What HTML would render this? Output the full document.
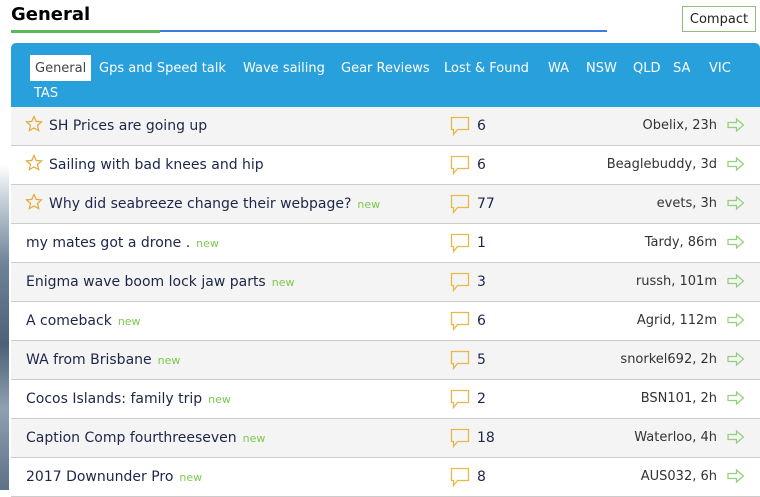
<!DOCTYPE html>
<html><head><meta charset="utf-8"><style>
*{margin:0;padding:0;box-sizing:border-box}
body{width:760px;height:490px;overflow:hidden;background:#fff;font-family:"DejaVu Sans","Liberation Sans",sans-serif;position:relative}
.bgimg{position:absolute;left:0;top:165px;width:9px;height:325px;background:linear-gradient(180deg,#fff 0%,#c9d3dd 10%,#6f8499 30%,#4c6178 55%,#8ea0b2 75%,#5d7187 100%)}
h1{position:absolute;left:11px;top:4px;font-size:18px;font-weight:bold;color:#000}
.ln1{position:absolute;left:11px;top:30px;width:149px;height:3px;background:#5cb85c}
.ln2{position:absolute;left:160px;top:30px;width:447px;height:2px;background:#3b7dd8}
.compact{position:absolute;left:682px;top:6px;width:74px;height:26px;border:1px solid #8bbf7a;font-size:13px;color:#222;text-align:center;line-height:25px}
.hdr{position:absolute;left:11px;top:43px;width:749px;height:64px;background:#27a0dc;border-radius:5px 5px 0 0}
.tab{position:absolute;top:12px;font-size:13px;color:#fff;height:26px;line-height:27px;white-space:nowrap}
.tab.act{background:#fff;color:#444;padding:0 5px}
.row{position:absolute;left:11px;width:749px;height:39px;border-bottom:1px solid #ccc;color:#1d2648;font-size:14px}
.row.o{background:#f4f4f4}
.t{position:absolute;top:11px;left:15px;white-space:nowrap}
.s .t{left:38px}
.new{color:#7dc84e;font-size:11px;margin-left:6px}
.star{position:absolute;left:14px;top:8px}
.cm{position:absolute;left:439px;top:9px}
.n{position:absolute;left:466px;top:11px}
.u{position:absolute;right:43px;top:11px;font-size:13px;color:#333;white-space:nowrap}
.ar{position:absolute;right:15px;top:11px}
</style></head><body>
<div class="bgimg"></div>
<h1>General</h1><div class="ln1"></div><div class="ln2"></div>
<div class="compact">Compact</div>
<div class="hdr">
<div class="tab act" style="left:19px">General</div>
<div class="tab" style="left:88px">Gps and Speed talk</div>
<div class="tab" style="left:232px">Wave sailing</div>
<div class="tab" style="left:330px">Gear Reviews</div>
<div class="tab" style="left:433px">Lost &amp; Found</div>
<div class="tab" style="left:537px">WA</div>
<div class="tab" style="left:575px">NSW</div>
<div class="tab" style="left:622px">QLD</div>
<div class="tab" style="left:662px">SA</div>
<div class="tab" style="left:698px">VIC</div>
<div class="tab" style="left:23px;top:37px">TAS</div>
</div>

<div class="row o s" style="top:107px"><svg class="star" width="18" height="18" viewBox="0 0 18 18"><path d="M9 1.5L11.2 6.4 16.5 6.9 12.5 10.4 13.7 15.7 9 12.9 4.3 15.7 5.5 10.4 1.5 6.9 6.8 6.4Z" fill="none" stroke="#e8a838" stroke-width="1.2"/></svg><span class="t">SH Prices are going up</span><svg class="cm" width="20" height="20" viewBox="0 0 20 20"><path d="M1.5 1.5H18.5V13.5H7.5L3.5 18.5V13.5H1.5Z" fill="none" stroke="#e8b84a" stroke-width="1.3"/></svg><span class="n">6</span><span class="u">Obelix, 23h</span><svg class="ar" width="18" height="14" viewBox="0 0 18 14"><path d="M1 4.5H9.5V1L16.5 7 9.5 13V9.5H1Z" fill="none" stroke="#8fd17a" stroke-width="1.2"/></svg></div>

<div class="row s" style="top:146px"><svg class="star" width="18" height="18" viewBox="0 0 18 18"><path d="M9 1.5L11.2 6.4 16.5 6.9 12.5 10.4 13.7 15.7 9 12.9 4.3 15.7 5.5 10.4 1.5 6.9 6.8 6.4Z" fill="none" stroke="#e8a838" stroke-width="1.2"/></svg><span class="t">Sailing with bad knees and hip</span><svg class="cm" width="20" height="20" viewBox="0 0 20 20"><path d="M1.5 1.5H18.5V13.5H7.5L3.5 18.5V13.5H1.5Z" fill="none" stroke="#e8b84a" stroke-width="1.3"/></svg><span class="n">6</span><span class="u">Beaglebuddy, 3d</span><svg class="ar" width="18" height="14" viewBox="0 0 18 14"><path d="M1 4.5H9.5V1L16.5 7 9.5 13V9.5H1Z" fill="none" stroke="#8fd17a" stroke-width="1.2"/></svg></div>

<div class="row o s" style="top:185px"><svg class="star" width="18" height="18" viewBox="0 0 18 18"><path d="M9 1.5L11.2 6.4 16.5 6.9 12.5 10.4 13.7 15.7 9 12.9 4.3 15.7 5.5 10.4 1.5 6.9 6.8 6.4Z" fill="none" stroke="#e8a838" stroke-width="1.2"/></svg><span class="t">Why did seabreeze change their webpage?<span class="new">new</span></span><svg class="cm" width="20" height="20" viewBox="0 0 20 20"><path d="M1.5 1.5H18.5V13.5H7.5L3.5 18.5V13.5H1.5Z" fill="none" stroke="#e8b84a" stroke-width="1.3"/></svg><span class="n">77</span><span class="u">evets, 3h</span><svg class="ar" width="18" height="14" viewBox="0 0 18 14"><path d="M1 4.5H9.5V1L16.5 7 9.5 13V9.5H1Z" fill="none" stroke="#8fd17a" stroke-width="1.2"/></svg></div>

<div class="row" style="top:224px"><span class="t">my mates got a drone .<span class="new">new</span></span><svg class="cm" width="20" height="20" viewBox="0 0 20 20"><path d="M1.5 1.5H18.5V13.5H7.5L3.5 18.5V13.5H1.5Z" fill="none" stroke="#e8b84a" stroke-width="1.3"/></svg><span class="n">1</span><span class="u">Tardy, 86m</span><svg class="ar" width="18" height="14" viewBox="0 0 18 14"><path d="M1 4.5H9.5V1L16.5 7 9.5 13V9.5H1Z" fill="none" stroke="#8fd17a" stroke-width="1.2"/></svg></div>

<div class="row o" style="top:263px"><span class="t">Enigma wave boom lock jaw parts<span class="new">new</span></span><svg class="cm" width="20" height="20" viewBox="0 0 20 20"><path d="M1.5 1.5H18.5V13.5H7.5L3.5 18.5V13.5H1.5Z" fill="none" stroke="#e8b84a" stroke-width="1.3"/></svg><span class="n">3</span><span class="u">russh, 101m</span><svg class="ar" width="18" height="14" viewBox="0 0 18 14"><path d="M1 4.5H9.5V1L16.5 7 9.5 13V9.5H1Z" fill="none" stroke="#8fd17a" stroke-width="1.2"/></svg></div>

<div class="row" style="top:302px"><span class="t">A comeback<span class="new">new</span></span><svg class="cm" width="20" height="20" viewBox="0 0 20 20"><path d="M1.5 1.5H18.5V13.5H7.5L3.5 18.5V13.5H1.5Z" fill="none" stroke="#e8b84a" stroke-width="1.3"/></svg><span class="n">6</span><span class="u">Agrid, 112m</span><svg class="ar" width="18" height="14" viewBox="0 0 18 14"><path d="M1 4.5H9.5V1L16.5 7 9.5 13V9.5H1Z" fill="none" stroke="#8fd17a" stroke-width="1.2"/></svg></div>

<div class="row o" style="top:341px"><span class="t">WA from Brisbane<span class="new">new</span></span><svg class="cm" width="20" height="20" viewBox="0 0 20 20"><path d="M1.5 1.5H18.5V13.5H7.5L3.5 18.5V13.5H1.5Z" fill="none" stroke="#e8b84a" stroke-width="1.3"/></svg><span class="n">5</span><span class="u">snorkel692, 2h</span><svg class="ar" width="18" height="14" viewBox="0 0 18 14"><path d="M1 4.5H9.5V1L16.5 7 9.5 13V9.5H1Z" fill="none" stroke="#8fd17a" stroke-width="1.2"/></svg></div>

<div class="row" style="top:380px"><span class="t">Cocos Islands: family trip<span class="new">new</span></span><svg class="cm" width="20" height="20" viewBox="0 0 20 20"><path d="M1.5 1.5H18.5V13.5H7.5L3.5 18.5V13.5H1.5Z" fill="none" stroke="#e8b84a" stroke-width="1.3"/></svg><span class="n">2</span><span class="u">BSN101, 2h</span><svg class="ar" width="18" height="14" viewBox="0 0 18 14"><path d="M1 4.5H9.5V1L16.5 7 9.5 13V9.5H1Z" fill="none" stroke="#8fd17a" stroke-width="1.2"/></svg></div>

<div class="row o" style="top:419px"><span class="t">Caption Comp fourthreeseven<span class="new">new</span></span><svg class="cm" width="20" height="20" viewBox="0 0 20 20"><path d="M1.5 1.5H18.5V13.5H7.5L3.5 18.5V13.5H1.5Z" fill="none" stroke="#e8b84a" stroke-width="1.3"/></svg><span class="n">18</span><span class="u">Waterloo, 4h</span><svg class="ar" width="18" height="14" viewBox="0 0 18 14"><path d="M1 4.5H9.5V1L16.5 7 9.5 13V9.5H1Z" fill="none" stroke="#8fd17a" stroke-width="1.2"/></svg></div>

<div class="row" style="top:458px"><span class="t">2017 Downunder Pro<span class="new">new</span></span><svg class="cm" width="20" height="20" viewBox="0 0 20 20"><path d="M1.5 1.5H18.5V13.5H7.5L3.5 18.5V13.5H1.5Z" fill="none" stroke="#e8b84a" stroke-width="1.3"/></svg><span class="n">8</span><span class="u">AUS032, 6h</span><svg class="ar" width="18" height="14" viewBox="0 0 18 14"><path d="M1 4.5H9.5V1L16.5 7 9.5 13V9.5H1Z" fill="none" stroke="#8fd17a" stroke-width="1.2"/></svg></div>
</body></html>
